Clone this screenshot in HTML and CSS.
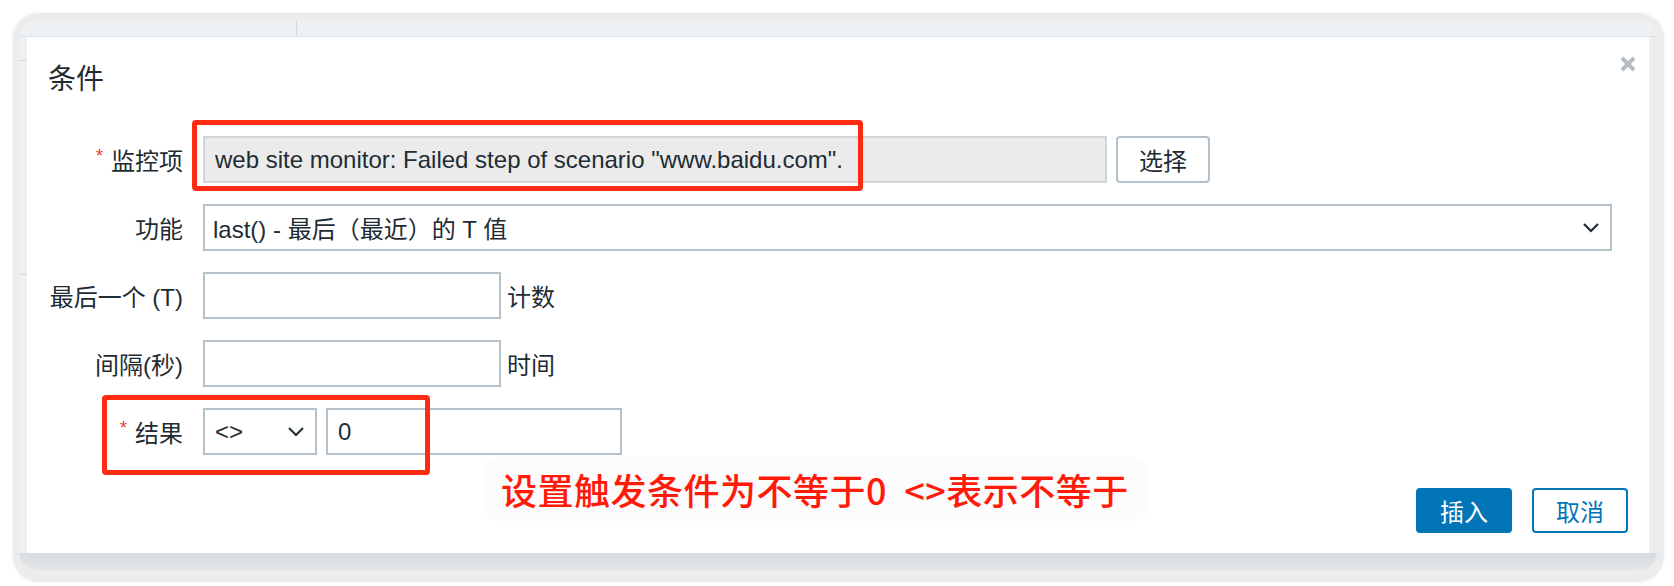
FILE: index.html
```html
<!DOCTYPE html>
<html lang="zh">
<head>
<meta charset="utf-8">
<title>条件</title>
<link rel="stylesheet" href="styles.css">
</head>
<body>
<div class="frame">
  <div class="screen">
    <div class="topbar"><div class="topbar-cell"></div><div class="topbar-rest"></div></div>
    <div class="middle">
      <div class="side-left"><div class="side-line l1"></div><div class="side-line l2"></div></div>
      <div class="dialog">
        <div class="dialog-head">
          <h2 class="dialog-title">条件</h2>
          <button class="close" type="button" aria-label="close">
            <svg width="18" height="18" viewBox="0 0 18 18"><path d="M3 3 L15 15 M15 3 L3 15" stroke="#b3bdc3" stroke-width="4" stroke-linecap="butt"/></svg>
          </button>
        </div>
        <div class="form">
          <label class="lbl"><span class="req">*</span>监控项</label>
          <div class="ctl">
            <input class="inp inp-item" type="text" readonly value="web site monitor: Failed step of scenario &quot;www.baidu.com&quot;.">
            <button class="btn-alt" type="button">选择</button>
          </div>

          <label class="lbl">功能</label>
          <div class="ctl">
            <div class="select select-func"><span>last() - 最后（最近）的 T 值</span>
              <svg width="18" height="12" viewBox="0 0 18 12"><path d="M2 2 L9 9 L16 2" fill="none" stroke="#1f2c33" stroke-width="2.2"/></svg>
            </div>
          </div>

          <label class="lbl">最后一个 (T)</label>
          <div class="ctl">
            <input class="inp inp-short" type="text" value="">
            <span class="unit">计数</span>
          </div>

          <label class="lbl">间隔(秒)</label>
          <div class="ctl">
            <input class="inp inp-short" type="text" value="">
            <span class="unit">时间</span>
          </div>

          <label class="lbl"><span class="req">*</span>结果</label>
          <div class="ctl">
            <div class="select select-op"><span>&lt;&gt;</span>
              <svg width="18" height="12" viewBox="0 0 18 12"><path d="M2 2 L9 9 L16 2" fill="none" stroke="#1f2c33" stroke-width="2"/></svg>
            </div>
            <input class="inp inp-val" type="text" value="0">
          </div>
        </div>
        <div class="dialog-foot">
          <button class="btn-primary" type="button">插入</button>
          <button class="btn-cancel" type="button">取消</button>
        </div>
        <div class="note">设置触发条件为不等于0&nbsp;&nbsp;&lt;&gt;表示不等于</div>
      </div>
      <div class="side-right"></div>
    </div>
    <div class="bottomband"></div>
  </div>
</div>
<div class="mark mark-item"></div>
<div class="mark mark-result"></div>
</body>
</html>
```
FILE: styles.css
```css
* { box-sizing: border-box; }
html, body { margin: 0; padding: 0; }
body {
  background: #ffffff;
  width: 1674px;
  height: 586px;
  overflow: hidden;
  position: relative;
  font-family: "Liberation Sans", "Noto Sans CJK SC", sans-serif;
  color: #1f2c33;
}
.frame {
  margin: 13px 0 0 13px;
  width: 1651px;
  height: 569px;
  border-radius: 26px;
  background: #ececec;
  box-shadow: 0 0 4px rgba(0,0,0,0.06);
  padding: 7px 6px 0 6px;
}
.screen {
  width: 1638px;
  height: 551px;
  border-radius: 18px 18px 20px 20px;
  background: #eef1f3;
  overflow: hidden;
  display: flex;
  flex-direction: column;
}
.topbar {
  height: 17px;
  display: flex;
  border-bottom: 1px solid #dde3e6;
}
.topbar-cell { width: 278px; border-right: 1px solid #d3d9dc; }
.topbar-rest { flex: 1; }
.middle {
  display: flex;
  height: 516px;
}
.side-left {
  width: 8px;
  background: #eef1f3;
  display: flex;
  flex-direction: column;
  padding-top: 23px;
  gap: 213px;
}
.side-line { height: 1px; background: #d3d9dc; }
.side-right { flex: 1; background: #e8ecee; border-left: 3px solid #eef1f3; }
.bottomband {
  flex: 1;
  background: linear-gradient(#d6dcdf, #dfe3e6 70%, #e6e8ea);
}
.dialog {
  width: 1622px;
  height: 516px;
  background: #ffffff;
  position: relative;
  display: flex;
  flex-direction: column;
  padding: 0 21px 20px 21px;
}
.dialog-head {
  display: flex;
  justify-content: space-between;
  align-items: flex-start;
  padding-top: 26px;
}
.dialog-title {
  margin: 0;
  font-size: 28px;
  line-height: 34px;
  font-weight: 400;
  color: #1f2c33;
  font-family: "Liberation Sans", "Noto Sans CJK SC", sans-serif;
}
.close {
  margin: -12px -13px 0 0;
  background: none;
  border: 0;
  padding: 4px;
  width: 26px;
  height: 26px;
  display: flex;
  align-items: center;
  justify-content: center;
}
.form {
  margin-top: 39px;
  display: grid;
  grid-template-columns: 135px 1fr;
  column-gap: 20px;
  row-gap: 21px;
  grid-auto-rows: 47px;
  font-size: 24px;
}
.lbl {
  display: flex;
  align-items: center;
  justify-content: flex-end;
  white-space: nowrap;
  color: #1f2c33;
}
.req {
  color: #e53a2c;
  font-size: 18px;
  margin-right: 8px;
  position: relative;
  top: -3px;
}
.ctl {
  display: flex;
  align-items: center;
  gap: 9px;
}
.inp {
  height: 47px;
  border: 2px solid #b4c1c8;
  background: #ffffff;
  font: inherit;
  font-size: 24px;
  color: #1f2c33;
  padding: 0 9px;
  outline: none;
  border-radius: 0;
}
.inp-item {
  width: 904px;
  background: #ebebeb;
  border-color: #cfd6da;
  padding-left: 10px;
}
.inp-short { width: 298px; }
.inp-val { width: 296px; padding-left: 10px; }
.unit { margin-left: -3px; font-size: 24px; }
.btn-alt {
  width: 94px;
  height: 47px;
  border: 2px solid #b4c1c8;
  border-radius: 4px;
  background: #ffffff;
  font: inherit;
  font-size: 24px;
  color: #1f2c33;
  padding: 0;
}
.select {
  height: 47px;
  border: 2px solid #b4c1c8;
  background: #ffffff;
  display: flex;
  align-items: center;
  justify-content: space-between;
  padding: 0 10px 0 8px;
  font-size: 24px;
  white-space: nowrap;
}
.select-func { width: 1409px; }
.select-op { width: 114px; padding-left: 10px; }
.dialog-foot {
  margin-top: auto;
  display: flex;
  justify-content: flex-end;
  gap: 20px;
}
.btn-primary, .btn-cancel {
  width: 96px;
  height: 45px;
  border-radius: 4px;
  font-family: "Liberation Sans", "Noto Sans CJK SC", sans-serif;
  font-size: 24px;
  padding: 0;
}
.btn-primary {
  background: #0275b8;
  border: 2px solid #0275b8;
  color: #ffffff;
}
.btn-cancel {
  background: #ffffff;
  border: 2px solid #0275b8;
  color: #0275b8;
}
.note {
  position: absolute;
  left: 456px;
  top: 420px;
  padding: 12px 18px;
  border-radius: 14px;
  background: #fcfcfc;
  color: #ff1a0a;
  font-family: "Noto Sans CJK SC", sans-serif;
  font-weight: 500;
  font-size: 36px;
  letter-spacing: 0.5px;
  line-height: 40px;
  white-space: nowrap;
}
.mark {
  position: absolute;
  border: 5px solid #ff2a12;
  border-radius: 4px;
}
.mark-item { left: 192px; top: 120px; width: 671px; height: 71px; }
.mark-result { left: 102px; top: 395px; width: 328px; height: 80px; }
```
